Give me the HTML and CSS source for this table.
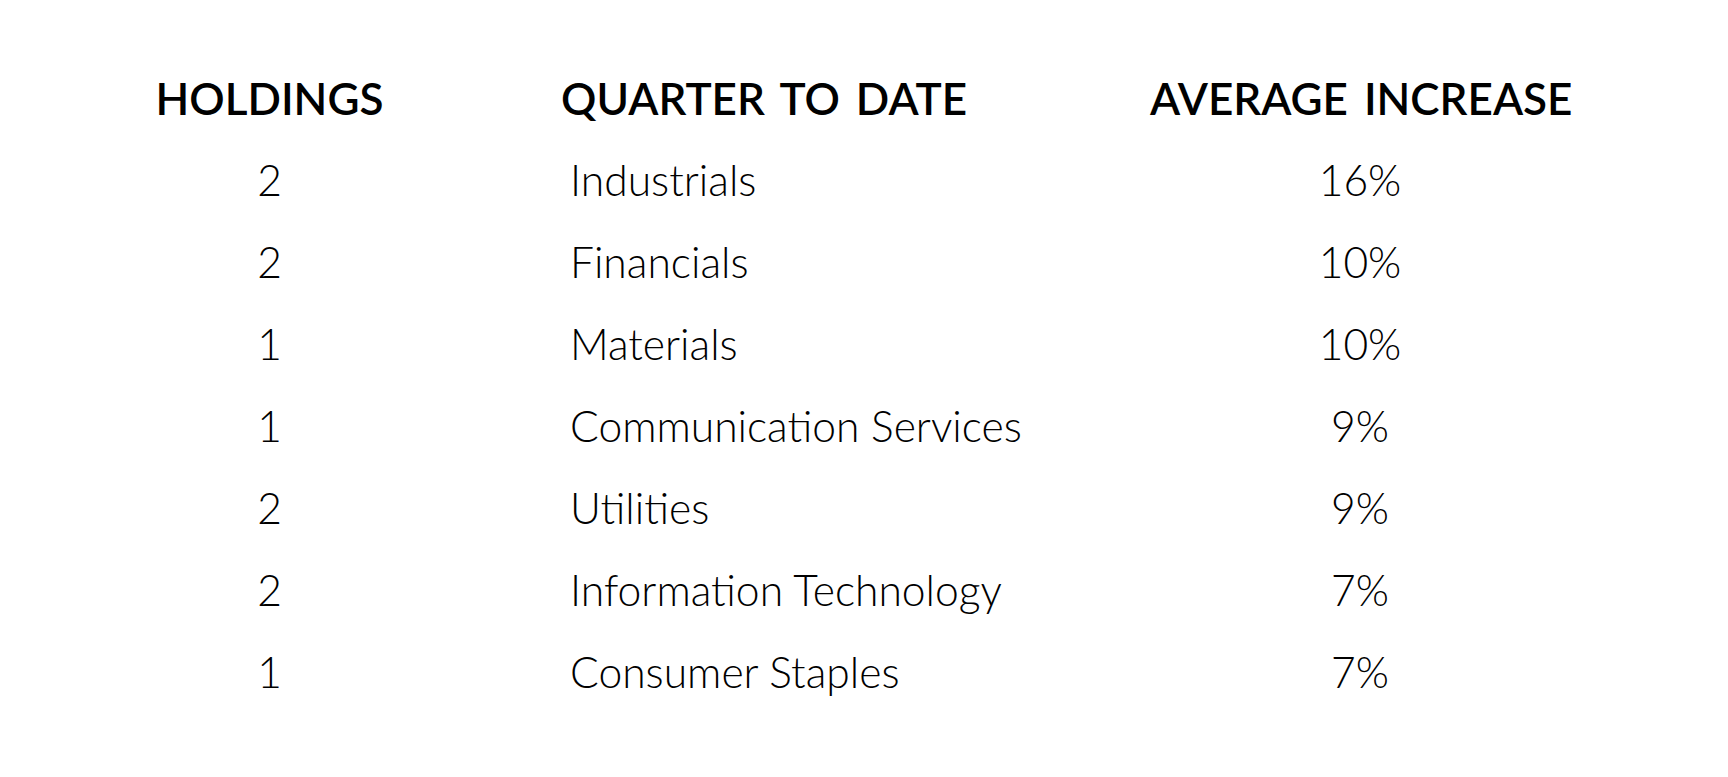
FILE: index.html
```html
<!DOCTYPE html>
<html lang="en">
<head>
<meta charset="utf-8">
<title>Holdings</title>
<link rel="stylesheet" href="styles.css">
</head>
<body>
<div class="table">
  <div class="cell head c1">HOLDINGS</div>
  <div class="cell head c2">QUARTER TO DATE</div>
  <div class="cell head c3">AVERAGE INCREASE</div>

  <div class="cell c1">2</div>
  <div class="cell c2">Industrials</div>
  <div class="cell c3">16%</div>

  <div class="cell c1">2</div>
  <div class="cell c2">Financials</div>
  <div class="cell c3">10%</div>

  <div class="cell c1">1</div>
  <div class="cell c2">Materials</div>
  <div class="cell c3">10%</div>

  <div class="cell c1">1</div>
  <div class="cell c2">Communication Services</div>
  <div class="cell c3">9%</div>

  <div class="cell c1">2</div>
  <div class="cell c2">Utilities</div>
  <div class="cell c3">9%</div>

  <div class="cell c1">2</div>
  <div class="cell c2">Information Technology</div>
  <div class="cell c3">7%</div>

  <div class="cell c1">1</div>
  <div class="cell c2">Consumer Staples</div>
  <div class="cell c3">7%</div>
</div>
</body>
</html>
```

FILE: styles.css
```css
html, body {
  margin: 0;
  padding: 0;
  background: #ffffff;
}

body {
  font-family: Lato, "Open Sans", sans-serif;
  color: #000000;
}

.table {
  display: grid;
  grid-template-columns: 539px 611px 420px;
  grid-auto-rows: 82px;
  padding-top: 57px;
}

.cell {
  font-size: 42.6px;
  font-weight: 300;
  line-height: 82px;
  white-space: nowrap;
}

.head {
  font-size: 44px;
  font-weight: 600;
  word-spacing: 5px;
}

.c1,
.c3 {
  text-align: center;
}

.c2 {
  text-align: left;
  padding-left: 31px;
}

.head.c2 {
  padding-left: 22px;
}
```
